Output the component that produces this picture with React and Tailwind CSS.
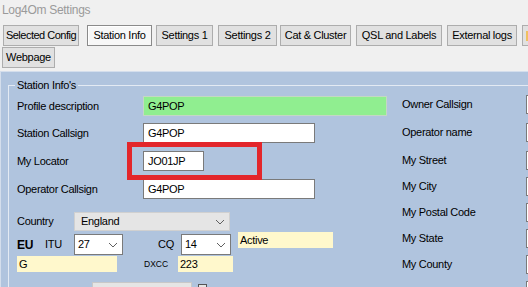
import React from "react";

function Tab({ label, className, sel }) {
  return (
    <div
      className={
        "h-[21px] flex items-center justify-center border whitespace-nowrap leading-none shrink-0 " +
        (sel ? "bg-[#f7f7f7] border-[#8a8a8a] shadow-[inset_1px_1px_0_#ffffff]" : "bg-[#e1e1e1] border-[#adadad]") +
        " " +
        className
      }
    >
      {label}
    </div>
  );
}

function Chevron() {
  return (
    <svg width="10" height="6" viewBox="0 0 10 6" className="shrink-0">
      <polyline points="1,1 5,5 9,1" fill="none" stroke="#606060" strokeWidth="1" />
    </svg>
  );
}

function RightRow({ label, className }) {
  return (
    <div className={"flex items-center h-[19px] " + className}>
      <div className="w-[124px] whitespace-nowrap">{label}</div>
      <div className="w-[20px] h-[19px] border border-[#7a7a7a] bg-white"></div>
    </div>
  );
}

export default function App() {
  return (
    <div className="relative w-[528px] h-[287px] overflow-hidden bg-[#f0f0f0] text-black font-['Liberation_Sans',Arial,sans-serif] text-[11px] tracking-[-0.3px]">
      {/* title */}
      <div className="h-[22px] pl-[2px] pt-[4px] text-[12px] leading-[13px] text-[#9a9a9a]">
        Log4Om Settings
      </div>

      {/* tabs */}
      <div className="flex mt-[3px] h-[21px]">
        <Tab label="Selected Config" className="ml-[3px] w-[76px] tracking-[-0.5px]" />
        <Tab label="Station Info" sel className="ml-[8px] w-[65px]" />
        <Tab label="Settings 1" className="ml-[4px] w-[57px]" />
        <Tab label="Settings 2" className="ml-[5px] w-[59px]" />
        <Tab label="Cat & Cluster" className="ml-[3px] w-[71px]" />
        <Tab label="QSL and Labels" className="ml-[5px] w-[86px]" />
        <Tab label="External logs" className="ml-[5px] w-[70px]" />
        <div className="ml-[5px] w-[20px] h-[21px] border border-[#adadad] bg-[#e1e1e1] flex items-center pl-[3px] shrink-0">
          <div className="w-[6px] h-[10px] bg-[#f0c060]"></div>
        </div>
      </div>
      <div className="flex mt-[1px] h-[21px]">
        <Tab label="Webpage" className="ml-[2px] w-[53px]" />
      </div>

      {/* panel */}
      <div className="mt-[3px] h-[216px] bg-[#b0c4de] border-t border-l border-[#d4deec]">
        <fieldset className="mt-[7px] ml-[7px] w-[600px] border-l border-t border-[#e3eaf3] pl-[6px]">
          <legend className="px-[2px] leading-[12px]">Station Info's</legend>
          <div className="flex">
            {/* left column */}
            <div className="w-[387px] pl-[2px]">
              <div className="flex items-center h-[20px] mt-[5px]">
                <div className="w-[126px]">Profile description</div>
                <div className="w-[244px] h-[20px] bg-[#90ee90] border border-[#c4d8c4] pl-[4px] flex items-center">G4POP</div>
              </div>
              <div className="flex items-center h-[20px] mt-[7px]">
                <div className="w-[126px]">Station Callsign</div>
                <div className="w-[172px] h-[20px] bg-white border border-[#7a7a7a] pl-[4px] flex items-center">G4POP</div>
              </div>
              <div className="flex items-center h-[20px] mt-[8px]">
                <div className="w-[126px]">My Locator</div>
                <div className="w-[61px] h-[20px] bg-white border border-[#7a7a7a] pl-[4px] flex items-center">JO01JP</div>
              </div>
              <div className="flex items-center h-[20px] mt-[8px]">
                <div className="w-[126px]">Operator Callsign</div>
                <div className="w-[172px] h-[20px] bg-white border border-[#7a7a7a] pl-[4px] flex items-center">G4POP</div>
              </div>

              <div className="flex items-center h-[19px] mt-[13px]">
                <div className="w-[57px]">Country</div>
                <div className="w-[156px] h-[19px] bg-[#e5e5e5] border border-[#d0d0d0] pl-[6px] pr-[4px] flex items-center justify-between">
                  <span>England</span>
                  <Chevron />
                </div>
              </div>

              <div className="flex items-start h-[21px] mt-[3px]">
                <div className="w-[28px] font-bold text-[12px] self-center">EU</div>
                <div className="w-[29px] self-center">ITU</div>
                <div className="w-[49px] h-[21px] bg-white border border-[#7a7a7a] pl-[3px] pr-[4px] flex items-center justify-between">
                  <span>27</span>
                  <Chevron />
                </div>
                <div className="ml-[35px] w-[23px] self-center">CQ</div>
                <div className="w-[50px] h-[21px] bg-white border border-[#7a7a7a] pl-[3px] pr-[4px] flex items-center justify-between">
                  <span>14</span>
                  <Chevron />
                </div>
                <div className="ml-[7px] -mt-[2px] w-[95px] h-[16px] bg-[#fff8cc] pl-[2px] flex items-center">Active</div>
              </div>

              <div className="flex items-center h-[16px] mt-[1px]">
                <div className="w-[100px] h-[16px] bg-[#fff8cc] pl-[2px] flex items-center">G</div>
                <div className="ml-[27px] w-[34px] text-[8.5px] tracking-normal">DXCC</div>
                <div className="w-[55px] h-[16px] bg-[#fff8cc] pl-[2px] flex items-center">223</div>
              </div>

              <div className="flex items-start mt-[10px]">
                <div className="ml-[75px] w-[100px] h-[14px] bg-[#e5e5e5] border border-[#c8c8c8]"></div>
                <div className="ml-[6px] mt-[2px] w-[9px] h-[9px] border border-[#555] bg-[#e5e5e5]"></div>
              </div>
            </div>

            {/* right column */}
            <div>
              <RightRow label="Owner Callsign" className="mt-[4px]" />
              <RightRow label="Operator name" className="mt-[9px]" />
              <RightRow label="My Street" className="mt-[9px]" />
              <RightRow label="My City" className="mt-[7px]" />
              <RightRow label="My Postal Code" className="mt-[7px]" />
              <RightRow label="My State" className="mt-[7px]" />
              <RightRow label="My County" className="mt-[7px]" />
              <RightRow label="" className="mt-[7px]" />
            </div>
          </div>
        </fieldset>
      </div>

      {/* red annotation */}
      <div className="absolute left-[127px] top-[142px] w-[135px] h-[38px] border-[5px] border-[#e3262b]"></div>
    </div>
  );
}
